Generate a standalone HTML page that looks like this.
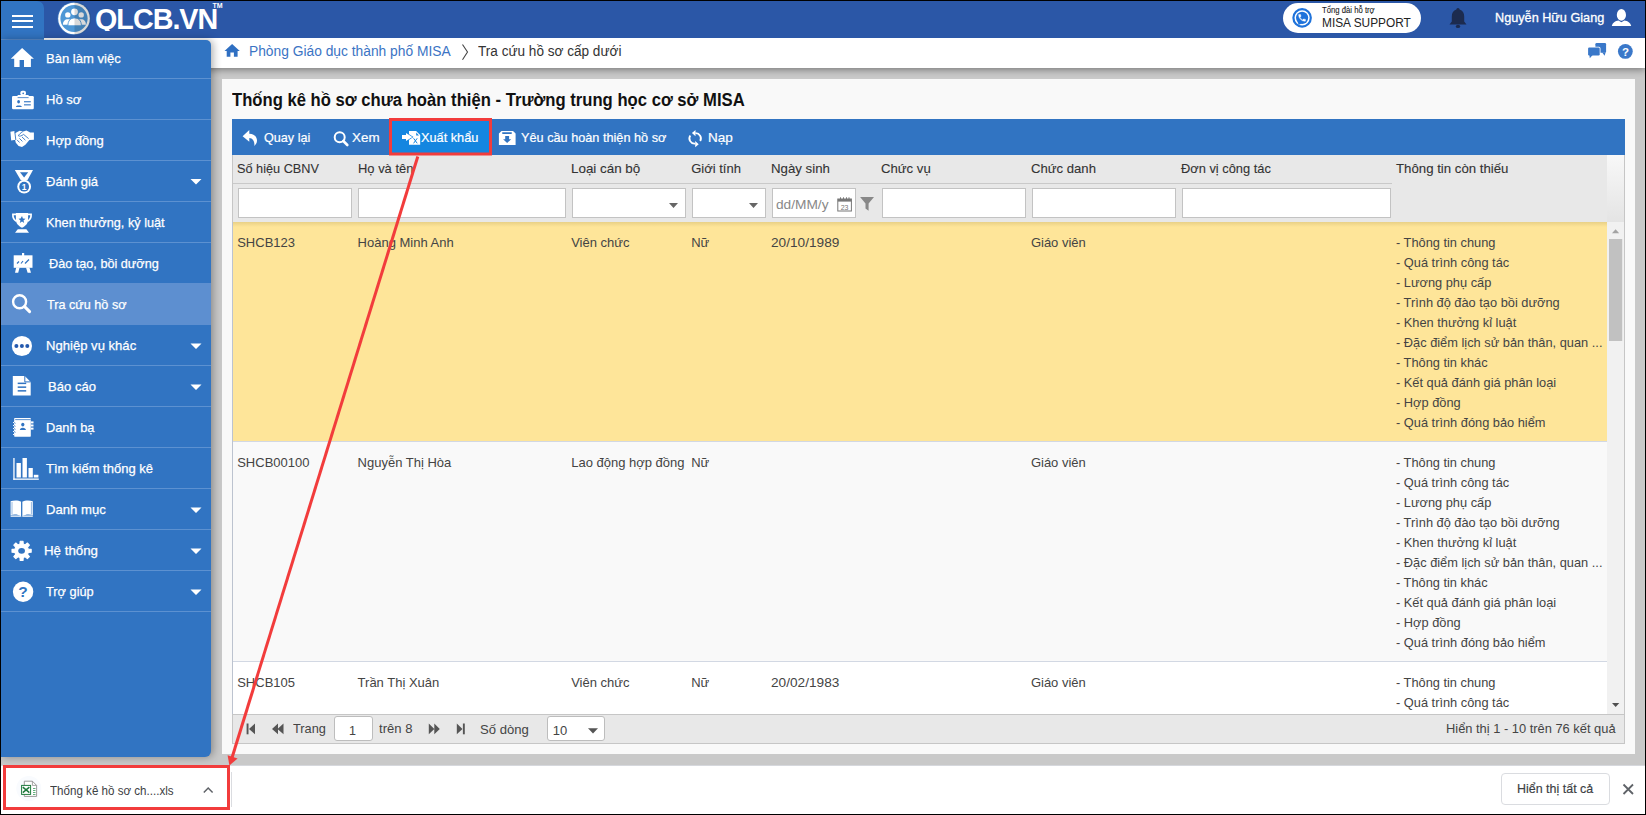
<!DOCTYPE html>
<html><head><meta charset="utf-8">
<style>
*{box-sizing:border-box;margin:0;padding:0}
html,body{width:1646px;height:815px;overflow:hidden;background:#000;font-family:"Liberation Sans",sans-serif;position:relative}
.a{position:absolute}
.t{position:absolute;white-space:nowrap;line-height:1;transform-origin:0 0}
</style></head><body>

<div class="a" style="left:1px;top:1px;width:1644px;height:813px;background:#c9c9c9"></div>
<div class="a" style="left:44px;top:38px;width:1601px;height:30px;background:#fff;box-shadow:0 2px 7px rgba(0,0,0,.38)"></div>
<div class="a" style="left:1px;top:1px;width:1644px;height:37px;background:#2b57a7"></div>
<div class="a" style="left:1px;top:1px;width:43px;height:39px;background:#3174c2;border-top-right-radius:7px;border-bottom:1px solid #5a8ecf"></div>
<div class="a" style="left:12px;top:15px;width:21px;height:2px;background:#fff"></div>
<div class="a" style="left:12px;top:20px;width:21px;height:2px;background:#fff"></div>
<div class="a" style="left:12px;top:26px;width:21px;height:2px;background:#fff"></div>
<div class="a" style="left:222px;top:79px;width:1413px;height:675px;background:#f9f9f9"></div>
<div class="a" style="left:1px;top:40px;width:210px;height:717px;background:#3174c2;border-radius:0 5px 6px 0;box-shadow:2px 0 8px rgba(0,0,0,.33);overflow:hidden">
<div class="a" style="left:0;top:38px;width:210px;height:1px;background:#5c91d1"></div>
<div class="a" style="left:0;top:79px;width:210px;height:1px;background:#5c91d1"></div>
<div class="a" style="left:0;top:120px;width:210px;height:1px;background:#5c91d1"></div>
<div class="a" style="left:0;top:161px;width:210px;height:1px;background:#5c91d1"></div>
<div class="a" style="left:0;top:202px;width:210px;height:1px;background:#5c91d1"></div>
<div class="a" style="left:0;top:243px;width:210px;height:1px;background:#5c91d1"></div>
<div class="a" style="left:0;top:284px;width:210px;height:1px;background:#5c91d1"></div>
<div class="a" style="left:0;top:325px;width:210px;height:1px;background:#5c91d1"></div>
<div class="a" style="left:0;top:366px;width:210px;height:1px;background:#5c91d1"></div>
<div class="a" style="left:0;top:407px;width:210px;height:1px;background:#5c91d1"></div>
<div class="a" style="left:0;top:448px;width:210px;height:1px;background:#5c91d1"></div>
<div class="a" style="left:0;top:489px;width:210px;height:1px;background:#5c91d1"></div>
<div class="a" style="left:0;top:530px;width:210px;height:1px;background:#5c91d1"></div>
<div class="a" style="left:0;top:571px;width:210px;height:1px;background:#5c91d1"></div>
<div class="a" style="left:0;top:243px;width:210px;height:42px;background:#5d8fd0"></div>
</div>
<div class="t" style="left:45.80px;top:51.56px;font-size:13.4px;color:#fff;-webkit-text-stroke:0.25px #fff;transform:scaleX(0.9749);">Bàn làm việc</div>
<div class="t" style="left:45.60px;top:92.56px;font-size:13.4px;color:#fff;-webkit-text-stroke:0.25px #fff;transform:scaleX(0.972);">Hồ sơ</div>
<div class="t" style="left:45.60px;top:133.56px;font-size:13.4px;color:#fff;-webkit-text-stroke:0.25px #fff;transform:scaleX(0.972);">Hợp đồng</div>
<div class="t" style="left:45.60px;top:174.56px;font-size:13.4px;color:#fff;-webkit-text-stroke:0.25px #fff;transform:scaleX(0.972);">Đánh giá</div>
<div class="t" style="left:45.60px;top:215.56px;font-size:13.4px;color:#fff;-webkit-text-stroke:0.25px #fff;transform:scaleX(0.9496);">Khen thưởng, kỷ luật</div>
<div class="t" style="left:48.60px;top:256.56px;font-size:13.4px;color:#fff;-webkit-text-stroke:0.25px #fff;transform:scaleX(0.9458);">Đào tạo, bồi dưỡng</div>
<div class="t" style="left:46.50px;top:297.56px;font-size:13.4px;color:#fff;-webkit-text-stroke:0.25px #fff;transform:scaleX(0.9438);">Tra cứu hồ sơ</div>
<div class="t" style="left:45.60px;top:338.56px;font-size:13.4px;color:#fff;-webkit-text-stroke:0.25px #fff;transform:scaleX(0.9769);">Nghiệp vụ khác</div>
<div class="t" style="left:48.00px;top:379.56px;font-size:13.4px;color:#fff;-webkit-text-stroke:0.25px #fff;transform:scaleX(0.9759);">Báo cáo</div>
<div class="t" style="left:45.60px;top:420.56px;font-size:13.4px;color:#fff;-webkit-text-stroke:0.25px #fff;transform:scaleX(0.9555);">Danh bạ</div>
<div class="t" style="left:45.60px;top:461.56px;font-size:13.4px;color:#fff;-webkit-text-stroke:0.25px #fff;transform:scaleX(0.972);">Tìm kiếm thống kê</div>
<div class="t" style="left:45.60px;top:502.56px;font-size:13.4px;color:#fff;-webkit-text-stroke:0.25px #fff;transform:scaleX(0.9788);">Danh mục</div>
<div class="t" style="left:43.60px;top:543.56px;font-size:13.4px;color:#fff;-webkit-text-stroke:0.25px #fff;transform:scaleX(0.9934);">Hệ thống</div>
<div class="t" style="left:45.60px;top:584.56px;font-size:13.4px;color:#fff;-webkit-text-stroke:0.25px #fff;transform:scaleX(0.9555);">Trợ giúp</div>
<div class="a" style="left:232px;top:119px;width:1393px;height:36px;background:#3174c2"></div>
<div class="a" style="left:392px;top:119px;width:97px;height:36px;background:#1486e0"></div>
<div class="t" style="left:263.80px;top:131.00px;font-size:13px;color:#fff;-webkit-text-stroke:0.2px #fff;transform:scaleX(0.97);">Quay lại</div>
<div class="t" style="left:351.90px;top:131.00px;font-size:13px;color:#fff;-webkit-text-stroke:0.2px #fff;transform:scaleX(1.03);">Xem</div>
<div class="t" style="left:420.80px;top:131.00px;font-size:13px;color:#fff;-webkit-text-stroke:0.2px #fff;transform:scaleX(0.98);">Xuất khẩu</div>
<div class="t" style="left:520.60px;top:131.00px;font-size:13px;color:#fff;-webkit-text-stroke:0.2px #fff;transform:scaleX(0.977);">Yêu cầu hoàn thiện hồ sơ</div>
<div class="t" style="left:707.80px;top:131.00px;font-size:13px;color:#fff;-webkit-text-stroke:0.2px #fff;transform:scaleX(1.04);">Nạp</div>
<div class="a" style="left:232px;top:155px;width:1393px;height:589px;background:#fff;border:1px solid #c6c6c6;border-top:0"></div>
<div class="a" style="left:233px;top:155px;width:1374px;height:67px;background:#e8e8e8"></div>
<div class="a" style="left:1607px;top:155px;width:17px;height:67px;background:linear-gradient(#f8f8f8,#e4e4e4)"></div>
<div class="a" style="left:233px;top:183px;width:1159px;height:1px;background:#c9c9c9"></div>
<div class="t" style="left:237.20px;top:161.90px;font-size:13px;color:#333;-webkit-text-stroke:0.1px #333;transform:scaleX(0.978);">Số hiệu CBNV</div>
<div class="t" style="left:357.60px;top:161.90px;font-size:13px;color:#333;-webkit-text-stroke:0.1px #333;transform:scaleX(0.996);">Họ và tên</div>
<div class="t" style="left:571.20px;top:161.90px;font-size:13px;color:#333;-webkit-text-stroke:0.1px #333;transform:scaleX(1.03);">Loại cán bộ</div>
<div class="t" style="left:691.20px;top:161.90px;font-size:13px;color:#333;-webkit-text-stroke:0.1px #333;">Giới tính</div>
<div class="t" style="left:771.30px;top:161.90px;font-size:13px;color:#333;-webkit-text-stroke:0.1px #333;transform:scaleX(1.019);">Ngày sinh</div>
<div class="t" style="left:881.10px;top:161.90px;font-size:13px;color:#333;-webkit-text-stroke:0.1px #333;transform:scaleX(1.011);">Chức vụ</div>
<div class="t" style="left:1030.90px;top:161.90px;font-size:13px;color:#333;-webkit-text-stroke:0.1px #333;transform:scaleX(1.009);">Chức danh</div>
<div class="t" style="left:1180.90px;top:161.90px;font-size:13px;color:#333;-webkit-text-stroke:0.1px #333;transform:scaleX(0.988);">Đơn vị công tác</div>
<div class="t" style="left:1396.40px;top:161.90px;font-size:13px;color:#333;-webkit-text-stroke:0.1px #333;transform:scaleX(1.017);">Thông tin còn thiếu</div>
<div class="a" style="left:238px;top:188px;width:114.0px;height:30px;background:#fff;border:1px solid #c3c3c3"></div>
<div class="a" style="left:358px;top:188px;width:207.5px;height:30px;background:#fff;border:1px solid #c3c3c3"></div>
<div class="a" style="left:572px;top:188px;width:113.5px;height:30px;background:#fff;border:1px solid #c3c3c3"></div>
<div class="a" style="left:692px;top:188px;width:73.5px;height:30px;background:#fff;border:1px solid #c3c3c3"></div>
<div class="a" style="left:772px;top:188px;width:83.5px;height:30px;background:#fff;border:1px solid #c3c3c3"></div>
<div class="a" style="left:882px;top:188px;width:143.5px;height:30px;background:#fff;border:1px solid #c3c3c3"></div>
<div class="a" style="left:1032px;top:188px;width:143.5px;height:30px;background:#fff;border:1px solid #c3c3c3"></div>
<div class="a" style="left:1182px;top:188px;width:208.6px;height:30px;background:#fff;border:1px solid #c3c3c3"></div>
<div class="t" style="left:775.70px;top:197.74px;font-size:13.3px;color:#888;transform:scaleX(1.03);">dd/MM/y</div>
<div class="a" style="left:233px;top:222px;width:1374px;height:492px;overflow:hidden">
<div class="a" style="left:0;top:0;width:1374px;height:219px;background:#fee599"></div>
<div class="a" style="left:0;top:0;width:1374px;height:5px;background:linear-gradient(rgba(120,100,40,.16),rgba(120,100,40,0))"></div>
<div class="a" style="left:0;top:219px;width:1374px;height:1px;background:#d2d8e3"></div>
<div class="a" style="left:0;top:220px;width:1374px;height:219px;background:#f9f9f9"></div>
<div class="a" style="left:0;top:439px;width:1374px;height:1px;background:#d2d8e3"></div>
</div>
<div class="a" style="left:1607px;top:222px;width:17px;height:492px;background:#f1f1f1"></div>
<div class="a" style="left:232px;top:222px;width:1px;height:492px;background:#bcc3cf"></div>
<div class="t" style="left:237.20px;top:235.80px;font-size:13px;color:#444;">SHCB123</div>
<div class="t" style="left:357.60px;top:235.80px;font-size:13px;color:#444;">Hoàng Minh Anh</div>
<div class="t" style="left:571.20px;top:235.80px;font-size:13px;color:#444;">Viên chức</div>
<div class="t" style="left:691.20px;top:235.80px;font-size:13px;color:#444;">Nữ</div>
<div class="t" style="left:771.30px;top:235.80px;font-size:13px;color:#444;transform:scaleX(1.05);">20/10/1989</div>
<div class="t" style="left:1030.90px;top:235.80px;font-size:13px;color:#444;">Giáo viên</div>
<div class="t" style="left:1396.40px;top:235.80px;font-size:13px;color:#444;transform:scaleX(0.985);">- Thông tin chung</div>
<div class="t" style="left:1396.40px;top:255.80px;font-size:13px;color:#444;transform:scaleX(0.985);">- Quá trình công tác</div>
<div class="t" style="left:1396.40px;top:275.80px;font-size:13px;color:#444;transform:scaleX(0.985);">- Lương phụ cấp</div>
<div class="t" style="left:1396.40px;top:295.80px;font-size:13px;color:#444;transform:scaleX(0.985);">- Trình độ đào tạo bồi dưỡng</div>
<div class="t" style="left:1396.40px;top:315.80px;font-size:13px;color:#444;transform:scaleX(0.985);">- Khen thưởng kỉ luật</div>
<div class="t" style="left:1396.40px;top:335.80px;font-size:13px;color:#444;transform:scaleX(0.985);">- Đặc điểm lịch sử bản thân, quan ...</div>
<div class="t" style="left:1396.40px;top:355.80px;font-size:13px;color:#444;transform:scaleX(0.985);">- Thông tin khác</div>
<div class="t" style="left:1396.40px;top:375.80px;font-size:13px;color:#444;transform:scaleX(0.985);">- Kết quả đánh giá phân loại</div>
<div class="t" style="left:1396.40px;top:395.80px;font-size:13px;color:#444;transform:scaleX(0.985);">- Hợp đồng</div>
<div class="t" style="left:1396.40px;top:415.80px;font-size:13px;color:#444;transform:scaleX(0.985);">- Quá trình đóng bảo hiểm</div>
<div class="t" style="left:237.20px;top:455.80px;font-size:13px;color:#444;">SHCB00100</div>
<div class="t" style="left:357.60px;top:455.80px;font-size:13px;color:#444;">Nguyễn Thị Hòa</div>
<div class="t" style="left:571.20px;top:455.80px;font-size:13px;color:#444;">Lao động hợp đồng</div>
<div class="t" style="left:691.20px;top:455.80px;font-size:13px;color:#444;">Nữ</div>
<div class="t" style="left:1030.90px;top:455.80px;font-size:13px;color:#444;">Giáo viên</div>
<div class="t" style="left:1396.40px;top:455.80px;font-size:13px;color:#444;transform:scaleX(0.985);">- Thông tin chung</div>
<div class="t" style="left:1396.40px;top:475.80px;font-size:13px;color:#444;transform:scaleX(0.985);">- Quá trình công tác</div>
<div class="t" style="left:1396.40px;top:495.80px;font-size:13px;color:#444;transform:scaleX(0.985);">- Lương phụ cấp</div>
<div class="t" style="left:1396.40px;top:515.80px;font-size:13px;color:#444;transform:scaleX(0.985);">- Trình độ đào tạo bồi dưỡng</div>
<div class="t" style="left:1396.40px;top:535.80px;font-size:13px;color:#444;transform:scaleX(0.985);">- Khen thưởng kỉ luật</div>
<div class="t" style="left:1396.40px;top:555.80px;font-size:13px;color:#444;transform:scaleX(0.985);">- Đặc điểm lịch sử bản thân, quan ...</div>
<div class="t" style="left:1396.40px;top:575.80px;font-size:13px;color:#444;transform:scaleX(0.985);">- Thông tin khác</div>
<div class="t" style="left:1396.40px;top:595.80px;font-size:13px;color:#444;transform:scaleX(0.985);">- Kết quả đánh giá phân loại</div>
<div class="t" style="left:1396.40px;top:615.80px;font-size:13px;color:#444;transform:scaleX(0.985);">- Hợp đồng</div>
<div class="t" style="left:1396.40px;top:635.80px;font-size:13px;color:#444;transform:scaleX(0.985);">- Quá trình đóng bảo hiểm</div>
<div class="t" style="left:237.20px;top:675.80px;font-size:13px;color:#444;">SHCB105</div>
<div class="t" style="left:357.60px;top:675.80px;font-size:13px;color:#444;">Trần Thị Xuân</div>
<div class="t" style="left:571.20px;top:675.80px;font-size:13px;color:#444;">Viên chức</div>
<div class="t" style="left:691.20px;top:675.80px;font-size:13px;color:#444;">Nữ</div>
<div class="t" style="left:771.30px;top:675.80px;font-size:13px;color:#444;transform:scaleX(1.05);">20/02/1983</div>
<div class="t" style="left:1030.90px;top:675.80px;font-size:13px;color:#444;">Giáo viên</div>
<div class="t" style="left:1396.40px;top:675.80px;font-size:13px;color:#444;transform:scaleX(0.985);">- Thông tin chung</div>
<div class="t" style="left:1396.40px;top:695.80px;font-size:13px;color:#444;transform:scaleX(0.985);">- Quá trình công tác</div>
<div class="a" style="left:232px;top:714px;width:1393px;height:30px;background:#e8e8e8;border:1px solid #c6c6c6"></div>
<div class="a" style="left:333.5px;top:716px;width:39px;height:25px;background:#fff;border:1px solid #bdbdbd;border-radius:3px"></div>
<div class="a" style="left:546.5px;top:716px;width:58px;height:25px;background:#fff;border:1px solid #bdbdbd;border-radius:3px"></div>
<div class="t" style="left:292.70px;top:721.70px;font-size:13px;color:#444;transform:scaleX(0.98);">Trang</div>
<div class="t" style="left:348.90px;top:724.20px;font-size:13px;color:#444;transform:scaleX(0.965);">1</div>
<div class="t" style="left:379.20px;top:721.70px;font-size:13px;color:#444;transform:scaleX(1.005);">trên 8</div>
<div class="t" style="left:480.40px;top:723.00px;font-size:13px;color:#444;transform:scaleX(1.007);">Số dòng</div>
<div class="t" style="left:552.70px;top:724.20px;font-size:13px;color:#444;">10</div>
<div class="t" style="left:1446.40px;top:722.00px;font-size:13px;color:#444;transform:scaleX(0.99);">Hiển thị 1 - 10 trên 76 kết quả</div>
<div class="a" style="left:1px;top:765px;width:1644px;height:49px;background:#fff;border-top:1px solid #d6d8dd"></div>
<div class="a" style="left:1501px;top:773px;width:109px;height:32px;border:1px solid #dadce0;border-radius:4px"></div>
<div class="t" style="left:49.70px;top:784.84px;font-size:12px;color:#3c4043;transform:scaleX(0.966);">Thống kê hồ sơ ch....xls</div>
<div class="t" style="left:1517.00px;top:783.33px;font-size:12.6px;color:#3c4043;-webkit-text-stroke:0.15px #3c4043;transform:scaleX(0.99);">Hiển thị tất cả</div>
<div class="t" style="left:249.40px;top:43.95px;font-size:14px;color:#3b74c4;transform:scaleX(0.985);">Phòng Giáo dục thành phố MISA</div>
<div class="t" style="left:477.90px;top:43.95px;font-size:14px;color:#333;transform:scaleX(0.97);">Tra cứu hồ sơ cấp dưới</div>
<div class="t" style="left:232.40px;top:91.36px;font-size:18px;color:#111;font-weight:bold;transform:scaleX(0.925);">Thống kê hồ sơ chưa hoàn thiện - Trường trung học cơ sở MISA</div>
<div class="a" style="left:1283px;top:3px;width:138px;height:30px;border-radius:15px;background:#fff"></div>
<div class="t" style="left:1321.70px;top:5.77px;font-size:8.3px;color:#222;-webkit-text-stroke:0.1px #222;transform:scaleX(0.93);">Tổng đài hỗ trợ</div>
<div class="t" style="left:1321.90px;top:16.99px;font-size:12.3px;color:#222;transform:scaleX(0.965);">MISA SUPPORT</div>
<div class="t" style="left:1495.30px;top:11.00px;font-size:13px;color:#fff;-webkit-text-stroke:0.3px #fff;transform:scaleX(0.975);">Nguyễn Hữu Giang</div>
<div class="a" style="left:90px;top:1px;width:140px;height:29.5px;overflow:hidden">
<div class="t" style="left:5.40px;top:3.85px;font-size:29px;color:#fff;font-weight:bold;transform:scaleX(0.99);letter-spacing:-1px;">QLCB.VN</div>
</div>
<div class="t" style="left:212.40px;top:2.07px;font-size:7px;color:#fff;font-weight:bold;">TM</div>
<svg class="a" style="left:0;top:0;z-index:10" width="1646" height="815" viewBox="0 0 1646 815">

<!-- logo -->
<circle cx="74" cy="18.5" r="16.6" fill="#4b8fd0" opacity="0.55"/>
<circle cx="74" cy="18.5" r="15.8" fill="#fff"/>
<circle cx="74" cy="18.5" r="13.6" fill="#4f98d6"/>
<g fill="#fff">
<circle cx="74.5" cy="11.8" r="3.4"/>
<circle cx="67.8" cy="14.9" r="2.7"/>
<circle cx="81.2" cy="14.9" r="2.7"/>
<path d="M62.9,24.8 C62.9,21 65,19.2 67.8,19.2 C70.6,19.2 72.5,21 72.5,24.8 Z"/>
<path d="M76.5,24.8 C76.5,21 78.4,19.2 81.2,19.2 C84,19.2 85.9,21 85.9,24.8 Z"/>
<path d="M67.9,25.8 C67.9,20.6 70.6,17.9 74.6,17.9 C78.6,17.9 81.4,20.6 81.4,25.8 Z" stroke="#4f98d6" stroke-width="0.9"/>
</g>
<path d="M74.5,1.9 L74.5,35.1 A16.6,16.6 0 0 0 74.5,1.9 Z" fill="#000" opacity="0.15"/>
<!-- breadcrumb separator -->
<path d="M462.5,44.5 L467.5,52 L462.5,59.8" stroke="#444" stroke-width="1.1" fill="none"/>
<g fill="#fff">
<!-- home -->
<path d="M10.8,58.7 L22.1,47.9 L33.9,58.7 L30.9,58.7 L30.9,67 L24,67 L24,60.1 L19.6,60.1 L19.6,67 L14.2,67 L14.2,58.7 Z"/>
<!-- id card -->
<rect x="12" y="96" width="21.8" height="13.2" rx="1.2"/>
<rect x="17.6" y="95" width="11" height="2.6"/>
<rect x="20.3" y="90.8" width="5.7" height="4.6" rx="2"/>
<!-- handshake -->
<path d="M10.4,131.8 L14.6,131 L15.6,139.8 L11.2,140.6 Z M29.6,132.4 L33.9,132.6 L33.9,139.8 L29.6,140 Z M15,133.2 L19.6,130.8 L23.4,131.6 L26.4,130.6 L29.8,132.2 L29.8,139.6 L25.4,144.8 L22,147 L18.6,146 L15.8,142.8 L15,139.5 Z"/>
<!-- medal -->
<path d="M14.8,170 L33,170 L27.5,180 L20.7,180 Z"/>
<circle cx="24.15" cy="186.7" r="6.9"/>
<!-- trophy -->
<path d="M15.9,213 L28.1,213 L28.1,220 C28.1,223.6 25,226.2 22,227.8 C19,226.2 15.9,223.6 15.9,220 Z"/>
<path d="M17.8,229.2 L26.4,229.2 L29,232.8 L15,232.8 Z"/>
<!-- easel -->
<rect x="13.7" y="255.3" width="18.8" height="12.5"/>
<rect x="22" y="253" width="2.2" height="3"/>
<path d="M16.2,267.5 L19.6,267.5 L18.2,272.7 L15,272.7 Z M26,267.5 L29.4,267.5 L31,272.7 L27.6,272.7 Z"/>
<!-- dots -->
<circle cx="21.9" cy="346" r="10.1"/>
<!-- doc -->
<path d="M12.8,376 L24.8,376 L30.7,381.9 L30.7,395.5 L12.8,395.5 Z"/>
<!-- address book -->
<rect x="14.2" y="417.9" width="16.6" height="18.8" rx="0.6"/>
<rect x="30.8" y="421.4" width="2.7" height="2"/><rect x="30.8" y="424.5" width="2.7" height="2"/><rect x="30.8" y="427.6" width="2.7" height="2"/>
<path d="M13,422.8 L15.2,421.4 M13,425.8 L15.2,424.4 M13,428.8 L15.2,427.4 M13,431.8 L15.2,430.4 M13,434.8 L15.2,433.4" stroke="#fff" stroke-width="1"/>
<!-- bars -->
<rect x="13.3" y="458" width="1.3" height="21.8"/><rect x="13.3" y="478.5" width="25.5" height="1.3"/>
<rect x="16.5" y="463" width="4.4" height="14.5"/><rect x="22.5" y="458" width="4.4" height="19.5"/><rect x="28.5" y="468" width="4.3" height="9.5"/><rect x="33.8" y="474.8" width="4.6" height="2.7"/>
<!-- book -->
<path d="M21.2,501.8 C18.5,500.2 14,500 10.6,501.3 L10.6,515.2 C14,514 18.5,514.4 21.2,516.4 Z"/>
<path d="M22.2,501.8 C24.9,500.2 29.4,500 32.8,501.3 L32.8,515.2 C29.4,514 24.9,514.4 22.2,516.4 Z"/>
<!-- gear -->
<path d="M31.19,549.36 L31.19,552.24 L28.30,552.46 L27.51,554.36 L29.40,556.56 L27.36,558.60 L25.16,556.71 L23.26,557.50 L23.04,560.39 L20.16,560.39 L19.94,557.50 L18.04,556.71 L15.84,558.60 L13.80,556.56 L15.69,554.36 L14.90,552.46 L12.01,552.24 L12.01,549.36 L14.90,549.14 L15.69,547.24 L13.80,545.04 L15.84,543.00 L18.04,544.89 L19.94,544.10 L20.16,541.21 L23.04,541.21 L23.26,544.10 L25.16,544.89 L27.36,543.00 L29.40,545.04 L27.51,547.24 L28.30,549.14Z" stroke="#fff" stroke-width="1.1" stroke-linejoin="round"/>
<!-- help -->
<circle cx="23.1" cy="591.8" r="10.2"/>
<!-- dropdown triangles -->
<path d="M190.5,179 L201.5,179 L196,184.5 Z M190.5,343.5 L201.5,343.5 L196,349 Z M190.5,384.5 L201.5,384.5 L196,390 Z M190.5,507.5 L201.5,507.5 L196,513 Z M190.5,548.5 L201.5,548.5 L196,554 Z M190.5,589.5 L201.5,589.5 L196,595 Z"/>
</g>
<g fill="#3174c2">
<circle cx="23.2" cy="93.4" r="0.8"/><rect x="17.6" y="97.3" width="11" height="0.8"/>
<ellipse cx="18.6" cy="101.7" rx="1.4" ry="1.7"/><path d="M15.8,107 C16.2,105.8 17.2,105.4 18.8,105.4 C20.4,105.4 21.5,105.8 21.9,107 Z"/>
<rect x="24" y="101.2" width="6.8" height="1.1"/><rect x="24" y="104.3" width="6.8" height="1.1"/>
<path d="M20,172.2 L28.2,172.2 L24.1,177.6 Z"/>
<path d="M22.1,218.6 L23.5,216 L24.4,218.6 L27,218.8 L25,220.5 L25.7,223 L23.5,221.6 L21.3,223 L22,220.5 L20,218.8 Z" transform="translate(-1.5,0)"/>
<path d="M17,263.5 L19,261.5 M21,263.5 L23,261 M25,263.5 L29,259.5" stroke="#3174c2" stroke-width="1.2" fill="none"/>
<ellipse cx="22.8" cy="424.6" rx="1.6" ry="1.9"/><path d="M19.8,430.1 C19.9,428.6 20.9,427.7 22.8,427.7 C24.7,427.7 25.8,428.6 26,430.1 Z"/>
<rect x="15.2" y="419.3" width="15.6" height="0.8"/><path d="M14.2,422.4 L15.6,423.4 M14.2,425.4 L15.6,426.4 M14.2,428.4 L15.6,429.4 M14.2,431.4 L15.6,432.4" stroke="#3174c2" stroke-width="0.7"/>
<rect x="17.7" y="382.6" width="8.5" height="1.5"/><rect x="17.7" y="386.4" width="8.5" height="1.5"/><rect x="17.7" y="390.1" width="8.5" height="1.5"/>
<path d="M24.8,376 L24.8,381.9 L30.7,381.9" stroke="#3174c2" stroke-width="1" fill="none"/>
<ellipse cx="21.6" cy="550.8" rx="3.4" ry="2.9"/>
</g>
<circle cx="24.15" cy="186.7" r="4.9" fill="#3174c2"/>
<text x="24.2" y="190" font-family="Liberation Sans" font-weight="bold" font-size="8.5" fill="#fff" text-anchor="middle">1</text>
<path d="M16,214.4 L12.9,214.4 C12.7,217.6 13.8,219.8 16.4,221.2 M28,214.4 L31.1,214.4 C31.3,217.6 30.2,219.8 27.6,221.2" stroke="#fff" stroke-width="1.7" fill="none"/>
<path d="M22.8,131.6 C20.5,133 18.8,134.6 18.4,135.8 C19.6,136.6 21.4,136 23.6,134.4 L28.6,138.6 M17.2,140.2 L19.6,142.4 M19.4,138.4 L22.4,141.4 M22,137 L25.4,140.2 M14.8,131.4 L15.8,140" stroke="#3174c2" stroke-width="0.9" fill="none"/>

<g fill="#2459ae"><circle cx="16.4" cy="346" r="2"/><circle cx="21.9" cy="346" r="2"/><circle cx="27.3" cy="346" r="2"/></g>
<path d="M21.7,501.8 L21.7,516.4" stroke="#3174c2" stroke-width="1"/><path d="M10.6,515.6 L20,515.6 L21.7,517 L23.4,515.6 L32.8,515.6 L32.8,516.8 L10.6,516.8 Z" fill="#fff"/><path d="M12,502 L12,514.5 M31.4,502 L31.4,514.5" stroke="#3174c2" stroke-width="0.5"/>
<circle cx="19.6" cy="301.7" r="6.5" stroke="#fff" stroke-width="2.4" fill="none"/>
<path d="M24.6,306.6 L29.6,311.6" stroke="#fff" stroke-width="3" stroke-linecap="round"/>
<text x="23.1" y="597.3" font-family="Liberation Sans" font-weight="bold" font-size="15.5" fill="#3174c2" text-anchor="middle">?</text>

<!-- toolbar icons -->
<g fill="#fff">
<path d="M242.6,136.3 L249.3,129.9 L249.3,133.7 C254.5,133.7 257,137 257,140.5 C257,142.8 255.9,144.6 254.3,146 C254.9,142 253,138.1 249.3,138.1 L249.3,141.7 Z"/>
<path d="M409,131 L416.1,131 L420.2,135.1 L420.2,144.8 L409,144.8 Z"/>
<path d="M501.5,131 L513,131 L515.6,133.6 L515.6,144.9 L498.9,144.9 L498.9,133.6 Z"/>
<path d="M691.9,133.1 L695.5,129.9 L695.5,136.2 Z M698.7,144.2 L695.2,141 L695.2,147.2 Z"/>
</g>
<circle cx="339.7" cy="137.3" r="5" stroke="#fff" stroke-width="2" fill="none"/>
<path d="M343.3,141 L347.3,145" stroke="#fff" stroke-width="2.6" stroke-linecap="round"/>
<path d="M695.4,133.2 A5.2,5.2 0 0 1 700.2,141 M695.2,143.6 A5.2,5.2 0 0 1 690.3,135.5" stroke="#fff" stroke-width="1.8" fill="none"/>
<path d="M402,135 L406,135 L406,133 L412.3,137 L406,141 L406,139 L402,139 Z" fill="#fff" stroke="#1486e0" stroke-width="1.3" paint-order="stroke"/>
<path d="M416.2,132.6 L416.2,135.6 L419,135.6 Z" fill="#1486e0"/>
<path d="M413.6,138.3 L417.2,143.3 M417.2,138.3 L413.6,143.3" stroke="#1486e0" stroke-width="1"/>
<g fill="#3174c2"><rect x="502" y="132.2" width="10" height="1.7" rx="0.8"/><path d="M505.2,136 L509.1,136 L509.1,139.3 L511.2,139.3 L507.15,142.9 L503.1,139.3 L505.2,139.3 Z"/></g>

<!-- header icons -->
<circle cx="1302.1" cy="17.85" r="8.7" stroke="#1f73db" stroke-width="2.2" fill="none"/>
<circle cx="1302.1" cy="17.85" r="6.1" fill="#1f73db"/>
<path d="M1297.6,21.2 L1298.6,25 L1301.6,23.4 Z" fill="#1f73db"/>
<path transform="translate(1297.5,13.3) scale(0.38)" d="M6.62 10.79c1.440 2.83 3.76 5.14 6.59 6.59l2.2-2.2c.27-.27.67-.36 1.02-.24 1.12.37 2.33.57 3.57.57.55 0 1 .45 1 1V20c0 .55-.45 1-1 1-9.39 0-17-7.61-17-17 0-.55.45-1 1-1h3.5c.55 0 1 .45 1 1 0 1.25.2 2.45.57 3.57.11.35.03.74-.25 1.02l-2.2 2.2z" fill="#fff" stroke="#fff" stroke-width="1" stroke-linejoin="round"/>
<path d="M1458,8 C1459,8 1459.6,8.8 1459.6,9.6 C1462.6,10.4 1464.2,13.2 1464.2,16.6 L1464.2,21.4 L1466.5,24.6 L1449.5,24.6 L1451.8,21.4 L1451.8,16.6 C1451.8,13.2 1453.4,10.4 1456.4,9.6 C1456.4,8.8 1457,8 1458,8 Z" fill="#1c2b4f"/>
<ellipse cx="1458" cy="26.4" rx="2.2" ry="1.6" fill="#1c2b4f"/>
<ellipse cx="1621.4" cy="14.9" rx="4.6" ry="5.8" fill="#fff"/>
<path d="M1611.8,26 C1612.4,22.6 1615.4,20.9 1618.4,20.4 L1621.4,22.2 L1624.4,20.4 C1627.6,20.9 1630.6,22.6 1631.2,26 Z" fill="#fff"/>

<!-- breadcrumb icons -->
<path d="M224.5,51 L232.1,44.1 L239.8,51 L237.6,51 L237.6,56.7 L233.9,56.7 L233.9,52.6 L230.4,52.6 L230.4,56.7 L226.7,56.7 L226.7,51 Z" fill="#2f6fc2"/>
<g fill="#3a78c9">
<rect x="1595.4" y="43.1" width="10.7" height="9.6" rx="1.2"/><path d="M1602.2,52.5 L1605.6,52.5 L1604.6,55.8 Z"/>
</g>
<rect x="1587.3" y="46.8" width="13.2" height="9.4" rx="1.6" fill="#fff"/>
<rect x="1588.1" y="47.6" width="11.6" height="7.8" rx="1.2" fill="#3a78c9"/>
<path d="M1589.4,55 L1592.6,55 L1589.8,58.3 Z" fill="#3a78c9"/>
<circle cx="1625.35" cy="51.4" r="7.4" fill="#3a78c9"/>
<text x="1625.4" y="55.6" font-family="Liberation Sans" font-weight="bold" font-size="11.5" fill="#fff" text-anchor="middle">?</text>

<!-- filter row -->
<path d="M669,203 L678,203 L673.5,208 Z M749,203 L758,203 L753.5,208 Z" fill="#666"/>
<rect x="837.8" y="199" width="13.6" height="12" stroke="#777" stroke-width="1" fill="#fff"/>
<rect x="837.8" y="199" width="13.6" height="2.6" fill="#777"/>
<path d="M840.5,197.3 L840.5,199.5 M843.5,197.3 L843.5,199.5 M846.5,197.3 L846.5,199.5 M849,197.3 L849,199.5" stroke="#777" stroke-width="1"/>
<text x="844.6" y="209.6" font-family="Liberation Sans" font-size="7" fill="#777" text-anchor="middle">23</text>
<path d="M860.1,197 L874,197 L868.6,203.5 L868.6,210.8 L865.5,208.4 L865.5,203.5 Z" fill="#888"/>

<!-- scrollbar -->
<path d="M1612,233.3 L1619.2,233.3 L1615.6,229.2 Z" fill="#a3a3a3"/>
<rect x="1609" y="239" width="13.2" height="102" fill="#c1c1c1"/>
<path d="M1612,703 L1619.3,703 L1615.65,707 Z" fill="#505050"/>

<!-- pager icons -->
<g fill="#555">
<rect x="246.6" y="723.5" width="1.9" height="10.8"/><path d="M255,723.5 L255,734.3 L249,728.9 Z"/>
<path d="M278,723.5 L278,734.3 L272,728.9 Z M283.5,723.5 L283.5,734.3 L277.5,728.9 Z"/>
<path d="M428.8,723.5 L428.8,734.3 L434.3,728.9 Z M434.3,723.5 L434.3,734.3 L439.8,728.9 Z"/>
<path d="M456.8,723.5 L456.8,734.3 L462.5,728.9 Z"/><rect x="462.9" y="723.5" width="1.9" height="10.8"/>
<path d="M588,728.3 L598,728.3 L593,733.4 Z"/>
</g>

<!-- download bar -->
<circle cx="28.8" cy="788.6" r="12.5" fill="#f9fbfe"/>
<path d="M24.3,781.2 L32.4,781.2 L36.6,785.4 L36.6,796.4 L24.3,796.4 Z" fill="#fff" stroke="#8f8f8f" stroke-width="0.9"/>
<path d="M32.4,781.2 L32.4,785.4 L36.6,785.4" stroke="#8f8f8f" stroke-width="0.8" fill="none"/>
<path d="M33,788.5 L35.5,788.5 M33,790.5 L35.5,790.5 M33,792.5 L35.5,792.5 M33,794.5 L35.5,794.5" stroke="#3a9a5a" stroke-width="0.8"/>
<rect x="21.6" y="785.4" width="9" height="9" fill="#fff" stroke="#1e7a3e" stroke-width="1"/>
<path d="M22.8,787.2 L29.4,792.6 M29.4,787.2 L22.8,792.6" stroke="#1e7a3e" stroke-width="1.5"/>
<path d="M203.8,792.5 L208.2,788 L212.6,792.5" stroke="#5f6368" stroke-width="1.5" fill="none"/>
<path d="M231.5,772 L231.5,807" stroke="#dadce0" stroke-width="1"/>
<path d="M1623.5,784.5 L1633,794 M1633,784.5 L1623.5,794" stroke="#5f6368" stroke-width="1.8"/>

<!-- red annotations -->
<rect x="390.5" y="119.5" width="100" height="34.5" stroke="#f23c3c" stroke-width="3" fill="none"/>
<rect x="4.5" y="766.5" width="224" height="42" stroke="#f23c3c" stroke-width="3" fill="none"/>
<path d="M417.8,156.5 L231.6,759" stroke="#f23c3c" stroke-width="3"/>
<path d="M229.4,765.5 L227.6,755.2 L237.6,758.4 Z" fill="#f23c3c"/>
</svg>
</body></html>
